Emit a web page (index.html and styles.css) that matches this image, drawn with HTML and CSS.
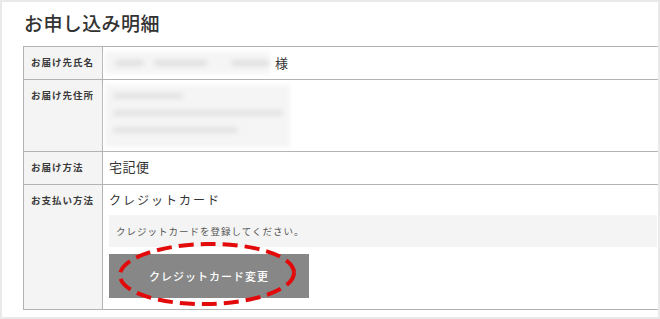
FILE: index.html
```html
<!DOCTYPE html>
<html lang="ja">
<head>
<meta charset="utf-8">
<title>お申し込み明細</title>
<link rel="stylesheet" href="styles.css">
</head>
<body>
<div class="panel">
  <h1 class="title">お申し込み明細</h1>
  <div class="detail">
    <div class="row">
      <div class="label">お届け先氏名</div>
      <div class="value value-name">
        <div class="blur blur-name"><span class="bar b1"></span><span class="bar b2"></span><span class="bar b3"></span></div>
        <span class="sama">様</span>
      </div>
    </div>
    <div class="row">
      <div class="label">お届け先住所</div>
      <div class="value value-addr">
        <div class="blur blur-addr">
          <span class="line l1"></span>
          <span class="line l2"></span>
          <span class="line l3"></span>
        </div>
      </div>
    </div>
    <div class="row">
      <div class="label">お届け方法</div>
      <div class="value"><div class="text">宅記便</div></div>
    </div>
    <div class="row">
      <div class="label">お支払い方法</div>
      <div class="value">
        <div class="text pay">クレジットカード</div>
        <div class="note">クレジットカードを登録してください。</div>
        <div class="btn-wrap">
          <div class="btn">クレジットカード変更</div>
          <svg class="circle" width="190" height="70" viewBox="0 0 190 70">
            <ellipse cx="97" cy="35" rx="87" ry="30" fill="none" stroke="#e20a0a" stroke-width="4" stroke-dasharray="15 7" transform="rotate(-1 97 35)"/>
          </svg>
        </div>
      </div>
    </div>
  </div>
</div>
</body>
</html>
```
FILE: styles.css
```css
* { box-sizing: border-box; }
html, body { margin: 0; padding: 0; }
body {
  background: #e9e9e9;
  font-family: "Noto Sans CJK JP", "Noto Sans", sans-serif;
  color: #333;
  padding: 2px 2px 2px 2px;
}
.panel {
  background: #fff;
  height: 315px;
  padding-top: 7px;
  overflow: hidden;
}
.title {
  margin: 0 0 9px 0;
  padding-left: 22px;
  font-size: 19px;
  line-height: 28px;
  font-weight: 500;
  letter-spacing: 0.4px;
  color: #333;
}
.detail {
  margin-left: 21px;
  border-top: 1px solid #b3b3b3;
  border-left: 1px solid #b3b3b3;
}
.row {
  display: flex;
  border-bottom: 1px solid #b3b3b3;
}
.label {
  flex: 0 0 79px;
  background: #f4f4f4;
  border-right: 1px solid #b3b3b3;
  padding: 8px 0 0 7px;
  font-size: 9.5px;
  line-height: 14px;
  font-weight: 700;
  letter-spacing: 1px;
  white-space: nowrap;
  color: #3a3a3a;
}
.value {
  flex: 1;
  padding: 5px 1px 0 6px;
  min-height: 32px;
}
.value-name {
  display: flex;
  align-items: center;
  padding-bottom: 5px;
}
.blur {
  background: #f5f5f5;
  filter: blur(2.5px);
}
.blur-name {
  width: 165px;
  height: 22px;
  margin-left: -4px;
  display: flex;
  align-items: center;
  gap: 10px;
  padding-left: 10px;
}
.bar {
  height: 6px;
  background: #e0e0e0;
  border-radius: 3px;
}
.b1 { width: 30px; }
.b2 { width: 55px; }
.b3 { width: 40px; margin-left: 14px; }
.sama {
  font-size: 13px;
  margin-left: 5px;
  line-height: 20px;
}
.value-addr { padding-bottom: 4px; }
.blur-addr {
  width: 185px;
  height: 62px;
  margin-left: -4px;
  padding: 8px 0 0 8px;
  display: flex;
  flex-direction: column;
  gap: 11px;
}
.line {
  display: block;
  height: 6px;
  background: #e2e2e2;
  border-radius: 3px;
}
.l1 { width: 70px; }
.l2 { width: 170px; }
.l3 { width: 125px; }
.text {
  font-size: 13px;
  line-height: 22px;
  letter-spacing: 0.5px;
  margin-top: -1px;
}
.pay {
  font-size: 12px;
  letter-spacing: 2px;
  line-height: 20px;
  margin-top: 0;
}
.note {
  margin-top: 5px;
  height: 32px;
  background: #f4f4f4;
  padding-left: 7px;
  font-size: 9.5px;
  line-height: 32px;
  letter-spacing: 1px;
  color: #555;
}
.btn-wrap {
  position: relative;
  margin-top: 7px;
  margin-bottom: 11px;
  width: 200px;
}
.btn {
  width: 200px;
  height: 44px;
  background: #878787;
  color: #fff;
  font-size: 11px;
  font-weight: 500;
  letter-spacing: 1px;
  line-height: 44px;
  text-align: center;
}
.circle {
  position: absolute;
  left: 1px;
  top: -15px;
  pointer-events: none;
}
```
